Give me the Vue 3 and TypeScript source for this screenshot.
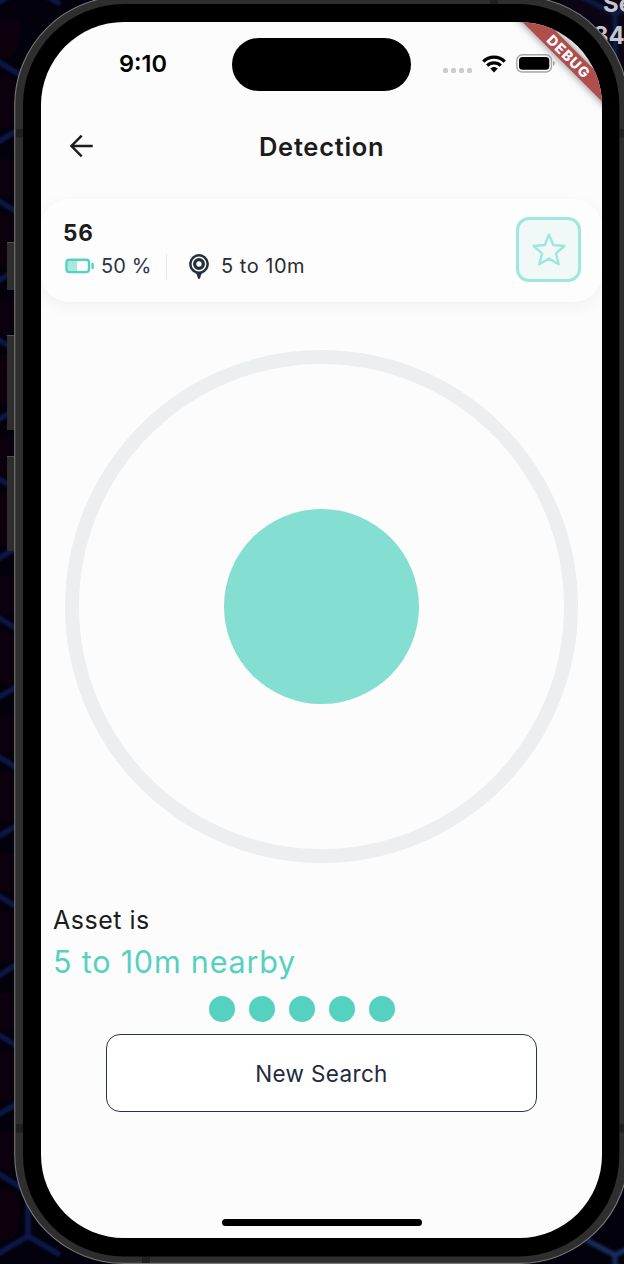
<script setup lang="ts">
const signalDots: number[] = [1, 2, 3, 4, 5]
const cellDots: number[] = [1, 2, 3, 4]

const hexPath = Array.from({ length: 11 }, (_, i) => {
  const y = -15 + i * 139
  return `M28 ${y}V${y - 44}L-4 ${y - 64}M28 ${y}L-4 ${y + 19}M28 ${y}L60 ${y + 19}M28 ${y - 44}L60 ${y - 63}`
}).join('')
</script>

<template>
  <main class="desktop">
    <svg class="backdrop" width="624" height="1264" viewBox="0 0 624 1264">
      <defs>
        <pattern id="glow" y="20" width="70" height="139" patternUnits="userSpaceOnUse">
          <rect width="70" height="139" fill="#03010c" />
          <ellipse cx="6" cy="12" rx="14" ry="26" fill="#0c000c" />
          <ellipse cx="6" cy="82" rx="14" ry="26" fill="#0c000c" />
        </pattern>
        <filter id="soft"><feGaussianBlur stdDeviation="1.6" /></filter>
      </defs>
      <rect width="624" height="1264" fill="url(#glow)" />
      <rect x="560" width="64" height="120" fill="#0a0414" />
      <g fill="none" stroke-width="5" filter="url(#soft)">
        <path :d="hexPath" stroke="#10174d" />
        <path d="M586 1240L615 1255L630 1248M615 1255V1270" stroke="#172f60" />
        <path d="M615 14V70M580 -4L615 14L630 6" stroke="#0d1c45" />
      </g>
      <g class="behind">
        <text x="603" y="12">Se</text>
        <text x="593" y="44">34</text>
      </g>
      <path d="M7 242h8v48H7zM7 335h8v95H7zM7 456h8v95H7z" fill="#2d2d2d" />
      <path d="M7 242.500h8M7 335.500h8M7 456.500h8" stroke="#505050" />
      <rect x="14.700" y="-3.600" width="613.600" height="1267" rx="109" fill="#2e2e2e" stroke="#777775" stroke-width="1.100" />
      <path d="M16 129h7v8.500h-7zM16 1124h7v8.500h-7zM619 129h5v8.500h-5zM619 1124h5v8.500h-5zM490 0h8v4h-8zM142 1256h8v7h-8z" fill="#202020" />
      <rect x="23" y="4" width="596.300" height="1252.500" rx="101" />
    </svg>

    <section class="screen">
      <header class="status">
        <span class="clock">9:10</span>
        <span class="island"></span>
        <span class="indicators">
          <span class="cells"><i v-for="n in cellDots" :key="n"></i></span>
          <svg class="wifi" width="24" height="18" viewBox="0 0 24 18">
            <g fill="none" stroke="#000" stroke-width="3.300">
              <path d="M1.300 6.600C7.200 .5 16.800 .5 22.700 6.600" />
              <path d="M5.200 10.600C9 6.900 15 6.900 18.800 10.600" />
            </g>
            <path d="M8.200 13.500C10.300 11.400 13.700 11.400 15.800 13.500L12 17.600Z" />
          </svg>
          <svg class="power" width="40" height="19" viewBox="0 0 40 19">
            <rect x=".8" y=".8" width="34.700" height="17.200" rx="5.500" fill="none" stroke="#a5a5a5" stroke-width="1.400" />
            <rect x="3" y="3" width="30.300" height="12.800" rx="3.500" />
            <path d="M37 6.800C39.300 7.800 39.300 11 37 12Z" fill="#a5a5a5" />
          </svg>
        </span>
      </header>

      <nav class="toolbar">
        <svg width="26" height="24" viewBox="0 0 26 24" fill="none" stroke="#1c1c1e" stroke-width="2.400">
          <path d="M24.700 12H3.500M13.700 1.700L3.400 12L13.700 22.300" />
        </svg>
        <h1>Detection</h1>
      </nav>

      <article class="card">
        <div class="info">
          <h2>56</h2>
          <div class="facts">
            <svg class="battery" width="30" height="16" viewBox="0 0 30 16">
              <rect x="2.500" y="2.500" width="9.500" height="11" fill="#a9e8de" />
              <rect x="1.500" y="1.700" width="22.500" height="12.400" rx="2.800" fill="none" stroke="#55d1c0" stroke-width="2.400" />
              <path d="M27.600 5.900V10.100" stroke="#55d1c0" stroke-width="2.400" stroke-linecap="round" />
            </svg>
            <span class="percent">50 %</span>
            <span class="rule"></span>
            <svg class="pin" width="22" height="27" viewBox="0 0 22 27">
              <path d="M11 1A10 10 0 0 0 8 20.500Q9.300 21.500 9.600 24.500Q11 27.500 12.400 24.500Q12.700 21.500 14 20.500A10 10 0 0 0 11 1Z" fill="#22303d" />
              <circle cx="11" cy="11" r="6.700" fill="none" stroke="#fcfcfc" stroke-width="1.500" />
              <circle cx="11" cy="11" r="2.700" fill="#fcfcfc" />
            </svg>
            <span class="range">5 to 10m</span>
          </div>
        </div>
        <button class="favorite" aria-label="Favorite">
          <svg width="36" height="36" viewBox="0 0 36 36" fill="none" stroke="#9ce8dd" stroke-width="2.400" stroke-linejoin="round">
            <path d="M18 2.500L22.300 13L33.500 14L25 21.400L27.700 32.300L18 26.600L8.300 32.300L11 21.400L2.500 14L13.700 13Z" />
          </svg>
        </button>
      </article>

      <div class="radar"><span class="pulse"></span></div>

      <p class="label">Asset is</p>
      <p class="distance">5 to 10m nearby</p>
      <div class="dots"><i v-for="n in signalDots" :key="n"></i></div>
      <button class="search">New Search</button>
      <div class="home"></div>
      <div class="banner"><span>DEBUG</span></div>
    </section>
  </main>
</template>

<style>
body { margin: 0; overflow: hidden; }
</style>

<style scoped>
.desktop {
  position: relative;
  box-sizing: border-box;
  width: 624px;
  height: 1264px;
  padding: 22px 0 0 41px;
  overflow: hidden;
  background: #03010c;
  font-family: Inter, "Liberation Sans", sans-serif;
}
.backdrop { position: absolute; inset: 0; }
.behind { fill: #c5c5cc; font: 700 24px Inter, sans-serif; }
.screen {
  position: relative;
  display: flex;
  flex-direction: column;
  width: 561px;
  height: 1216px;
  overflow: hidden;
  border-radius: 83px;
  background: #fcfcfc;
  color: #1c1c1e;
}
h1, h2, p { margin: 0; }
button { padding: 0; font-family: inherit; }
.status { display: flex; height: 84px; flex: none; }
.clock {
  width: 113px;
  margin: 27px 0 0 78px;
  font-size: 23.500px;
  line-height: 30px;
  font-weight: 600;
  color: #000;
}
.island { width: 179px; height: 52.500px; margin-top: 16px; border-radius: 27px; background: #000; }
.indicators { display: flex; margin-left: 32px; }
.cells { display: flex; gap: 3px; width: 39px; margin-top: 45.500px; }
.cells i { width: 5px; height: 5px; border-radius: 1.500px; background: #ccc; }
.wifi { margin-top: 32.500px; }
.power { margin: 32px 0 0 10px; }
.toolbar { display: flex; flex: none; align-items: center; height: 80px; padding-left: 27px; }
h1 { margin: 1px 0 0 165px; font-size: 25.500px; line-height: 32px; font-weight: 600; letter-spacing: .7px; }
.card {
  display: flex;
  flex: none;
  justify-content: space-between;
  box-sizing: border-box;
  height: 103px;
  margin-top: 13px;
  padding: 18px 21px 0 22px;
  border-radius: 28px;
  background: #fdfdfd;
  box-shadow: 0 4px 16px rgba(0, 0, 0, .05);
}
h2 { font-size: 22.500px; line-height: 32px; font-weight: 700; letter-spacing: .8px; }
.facts { display: flex; align-items: center; height: 34px; font-size: 20px; }
.battery { margin-left: 2px; }
.percent { width: 65px; margin-left: 6px; letter-spacing: .1px; color: #2b3447; white-space: nowrap; }
.rule { width: 1px; height: 25px; background: #e4e5e8; }
.pin { margin-left: 21px; }
.range { margin-left: 11px; letter-spacing: .5px; color: #2b2b2d; white-space: nowrap; }
.favorite {
  display: flex;
  align-items: center;
  justify-content: center;
  width: 65px;
  height: 65px;
  border: 3px solid #9ce8dd;
  border-radius: 13px;
  background: #f0f9f7;
}
.radar {
  display: flex;
  flex: none;
  align-items: center;
  justify-content: center;
  box-sizing: border-box;
  width: 513px;
  height: 513px;
  margin: 48px 0 0 24px;
  border: 14px solid #edeef0;
  border-radius: 50%;
}
.pulse { width: 195px; height: 195px; border-radius: 50%; background: #84dfd2; }
.label { margin: 41px 0 0 12px; font-size: 25px; line-height: 32px; letter-spacing: .5px; }
.distance { margin: 6px 0 0 12px; font-size: 30.500px; line-height: 40px; letter-spacing: .8px; color: #55d1c0; }
.dots { display: flex; flex: none; gap: 14px; margin: 13.500px 0 0 167.500px; }
.dots i { width: 26px; height: 26px; border-radius: 50%; background: #55d1c0; }
.search {
  flex: none;
  width: 431px;
  height: 78px;
  margin: 12.500px 0 0 65px;
  border: 1.500px solid #2b3447;
  border-radius: 14px;
  background: #fff;
  color: #222b3d;
  font-size: 22.500px;
  letter-spacing: .35px;
}
.home { width: 200px; height: 7px; margin: 107px 0 0 181px; border-radius: 4px; background: #000; }
.banner {
  position: absolute;
  right: -67px;
  top: 25.500px;
  width: 200px;
  height: 17px;
  transform: rotate(45deg);
  background: #b04e4e;
  box-shadow: 0 0 9px rgba(0, 0, 0, .5);
  color: #fff;
  text-align: center;
  font-size: 14px;
  line-height: 17px;
  font-weight: 800;
  letter-spacing: 1.200px;
}
</style>
